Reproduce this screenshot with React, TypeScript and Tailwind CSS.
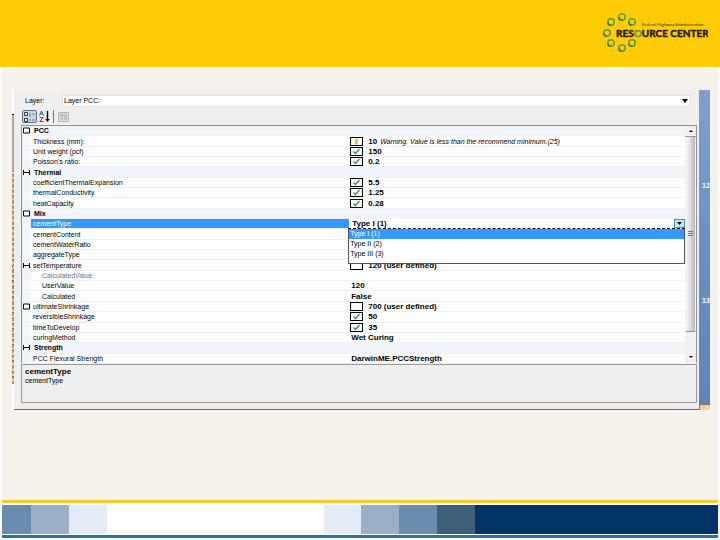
import React, { useState } from 'react';

type Status = 'ok' | 'warning' | 'empty';

interface Row {
    name: string;
    value?: string;
    note?: string;
    status?: Status;
    category?: boolean;
    toggle?: 'box' | 'bar';
    child?: boolean;
    muted?: boolean;
}

const rows: Row[] = [
    { name: 'PCC', category: true, toggle: 'box' },
    { name: 'Thickness (mm):', value: '10', status: 'warning', note: 'Warning. Value is less than the recommend minimum.(25)' },
    { name: 'Unit weight (pcf)', value: '150', status: 'ok' },
    { name: "Poisson's ratio:", value: '0.2', status: 'ok' },
    { name: 'Thermal', category: true, toggle: 'bar' },
    { name: 'coefficientThermalExpansion', value: '5.5', status: 'ok' },
    { name: 'thermalConductivity', value: '1.25', status: 'ok' },
    { name: 'heatCapacity', value: '0.28', status: 'ok' },
    { name: 'Mix', category: true, toggle: 'box' },
    { name: 'cementType' },
    { name: 'cementContent' },
    { name: 'cementWaterRatio' },
    { name: 'aggregateType' },
    { name: 'setTemperature', value: '120 (user defined)', status: 'empty', toggle: 'bar' },
    { name: 'CalculatedValue', child: true, muted: true },
    { name: 'UserValue', value: '120', child: true },
    { name: 'Calculated', value: 'False', child: true },
    { name: 'ultimateShrinkage', value: '700 (user defined)', status: 'empty', toggle: 'box' },
    { name: 'reversibleShrinkage', value: '50', status: 'ok' },
    { name: 'timeToDevelop', value: '35', status: 'ok' },
    { name: 'curingMethod', value: 'Wet Curing' },
    { name: 'Strength', category: true, toggle: 'bar' },
    { name: 'PCC Flexural Strength', value: 'DarwinME.PCCStrength' },
];

const cementTypes = ['Type I (1)', 'Type II (2)', 'Type III (3)'];

function Logo() {
    const dots = [[32, 7], [42, 12], [21, 12], [17, 23], [21, 33], [32, 38], [42, 33]];
    return (
        <svg width="118" height="44" viewBox="0 0 118 44" role="img" aria-label="Resource Center">
            {dots.map(([x, y]) => (
                <g key={`${x}-${y}`} fill="none">
                    <circle cx={x} cy={y} r="3.2" stroke="#5d9f35" strokeWidth="1.5" />
                    <path d={`M${x - 3.2} ${y}a3.2 3.2 0 0 0 3.2 3.2`} stroke="#2f7f6a" strokeWidth="1.5" />
                </g>
            ))}
            <text x="52" y="16" fontFamily="Lato, sans-serif" fontSize="4.4" fill="#3a3000">Federal Highway Administration</text>
            <text x="26" y="27" fontFamily="Lato, sans-serif" fontSize="10" fontWeight="700" fill="#1c1200" stroke="#1c1200" strokeWidth="0.4">
                RES<tspan fill="#5d9f35" stroke="#5d9f35">O</tspan>URCE CENTER
            </text>
        </svg>
    );
}

function StatusIcon({ status }: { status: Status }) {
    return (
        <svg width="13" height="9" viewBox="0 0 13 9" className="mr-[5px] shrink-0">
            <rect x="0.5" y="0.5" width="12" height="8" fill="#fff" stroke="#000" />
            {status === 'ok' && <path d="M3.5 4.5l2 2 4-4.5" fill="none" stroke="#2f9440" strokeWidth="1.3" />}
            {status === 'warning' && <path d="M5 1.5h3v6H5z" fill="#f0d33c" />}
            {status === 'warning' && <path d="M6.5 2.5v2M6.5 5.5v1" stroke="#d8b020" />}
        </svg>
    );
}

function ToggleIcon({ kind }: { kind: 'box' | 'bar' }) {
    return (
        <svg width="7" height="7" viewBox="0 0 7 7" className="mx-auto block">
            {kind === 'box'
                ? <path d="M.5 1h6v5h-6z" fill="#fff" stroke="#000" />
                : <path d="M.5 1v5M6.5 1v5M1 3.5h5" fill="none" stroke="#000" />}
        </svg>
    );
}

function CementCell() {
    const [type, setType] = useState(cementTypes[0]);
    return (
        <td className="relative p-0 align-middle">
            <select
                aria-label="cementType"
                value={type}
                onChange={e => setType(e.target.value)}
                className="block h-[9px] w-full appearance-none bg-white pl-[3px] text-[8px] leading-[9px] font-bold outline-none"
            >
                {cementTypes.map(t => <option key={t}>{t}</option>)}
            </select>
            <span className="pointer-events-none absolute top-0 right-0 flex h-full w-[11px] items-center justify-center border border-[#4a8fae] bg-[#c5e8f6]">
                <svg width="5" height="3" viewBox="0 0 5 3"><path d="M0 0h5L2.5 3z" /></svg>
            </span>
            <ul className="absolute top-full right-0 -left-px z-10 border border-t border-[#555] border-t-black bg-white pb-1 [border-top-style:dashed]">
                {cementTypes.map(t => (
                    <li key={t}>
                        <button
                            onClick={() => setType(t)}
                            className={`block h-[10px] w-full pl-px text-left leading-[10px] ${t === type ? 'bg-[#3399ff] text-white' : ''}`}
                        >
                            {t}
                        </button>
                    </li>
                ))}
            </ul>
        </td>
    );
}

function PropertyRow({ row }: { row: Row }) {
    const selected = row.name === 'cementType';
    return (
        <tr className={`border-b border-[#eff1f4] ${row.category ? 'bg-[#f2f5fa]' : ''}`}>
            <td className="bg-[#f2f5fa] p-0 align-middle">{row.toggle && <ToggleIcon kind={row.toggle} />}</td>
            <th
                scope="row"
                className={`p-0 text-left align-middle ${row.category ? 'pl-[3px] font-bold' : 'font-normal'} ${row.child ? 'pl-[11px]' : 'pl-[2px]'} ${row.muted ? 'text-gray-500' : ''} ${selected ? 'bg-[#3399ff] text-white' : ''}`}
            >
                {row.name}
            </th>
            {selected ? <CementCell /> : (
                <td className="p-0 align-middle">
                    <div className={`flex h-[9px] items-center whitespace-nowrap ${row.status ? 'pl-px' : 'pl-[2px]'}`}>
                        {row.status && <StatusIcon status={row.status} />}
                        <span className="text-[8px] font-bold">{row.value}</span>
                        {row.note && <em className="ml-[3px]">{row.note}</em>}
                    </div>
                </td>
            )}
        </tr>
    );
}

function Toolbar() {
    return (
        <div className="flex h-[15px] items-center pl-2">
            <button aria-label="Categorized" className="flex h-[13px] w-[15px] items-center justify-center rounded-xs border border-[#5b6f88] bg-[#c9d6e6]">
                <svg width="12" height="10" viewBox="0 0 12 10" fill="none" stroke="#26364f">
                    <path d="M.5.5h3v3h-3zM.5 6.5h3v3h-3z" fill="#fff" />
                    <path d="M5 2h2M8 2h3M5 4h2M5 8h2M8 8h3" stroke="#6a7f9c" />
                </svg>
            </button>
            <button aria-label="Alphabetical" className="ml-[2px]">
                <svg width="11" height="13" viewBox="0 0 11 13" fill="none">
                    <path d="M.5 5.5L2.5 1l2 4.5M1.2 4h2.6" stroke="#3a55a8" />
                    <path d="M.8 7.5h3.4L.8 11.5h3.7" stroke="#a02a3a" />
                    <path d="M8.5 1v9" stroke="#000" strokeWidth="1.4" />
                    <path d="M6.2 9h4.6L8.5 12z" fill="#000" />
                </svg>
            </button>
            <span className="mr-1 ml-[3px] h-[13px] w-px bg-[#777]" />
            <button aria-label="Property pages" disabled>
                <svg width="11" height="11" viewBox="0 0 11 11" fill="none" stroke="#b5b5b5">
                    <path d="M.5 1.5h10v9H.5z" fill="#dedede" />
                    <path d="M2 4h7M3 6h2M6 6h3M3 8h2M6 8h3" stroke="#a3a3a3" />
                </svg>
            </button>
        </div>
    );
}

function ScrollBar() {
    return (
        <div className="flex w-[11px] shrink-0 flex-col bg-[#f0f0f0]">
            <button aria-label="Scroll up" className="flex h-[11px] items-center justify-center border-b border-[#999]">
                <svg width="4" height="2"><path d="M0 2L2 0l2 2z" /></svg>
            </button>
            <div className="mx-px flex flex-1 items-center justify-center border-b border-[#888] bg-linear-to-r from-[#f7f7f7] via-[#dcdcde] to-[#b4b5bb]">
                <svg width="5" height="6" stroke="#777"><path d="M0 .5h5M0 2.5h5M0 4.5h5" /></svg>
            </div>
            <button aria-label="Scroll down" className="flex h-[31px] items-end justify-center pb-[5px]">
                <svg width="4" height="2"><path d="M0 0h4L2 2z" /></svg>
            </button>
        </div>
    );
}

function PropertyDialog() {
    return (
        <section className="flex min-w-0 flex-1 flex-col border-b border-[#666] bg-[#efefef] pt-[5px] pb-[6px]">
            <div className="mb-[2px] flex items-center pr-[8px] pl-[11px]">
                <label htmlFor="layer" className="w-[37px]">Layer:</label>
                <div className="relative flex-1">
                    <select
                        id="layer"
                        className="block h-[12px] w-full appearance-none border border-[#e2e2e2] bg-white pl-px leading-[10px] outline-none"
                    >
                        <option>Layer PCC:</option>
                    </select>
                    <svg width="6" height="4" viewBox="0 0 6 4" className="pointer-events-none absolute top-1 right-[3px]"><path d="M0 0h6L3 4z" /></svg>
                </div>
            </div>
            <Toolbar />
            <div className="mt-px mr-[2px] ml-[7px] flex h-[238px] overflow-hidden border-t border-r border-l border-[#8f929b]">
                <div className="min-w-0 flex-1 overflow-hidden bg-white">
                    <table className="h-[238px] w-full table-fixed border-collapse leading-[9px]">
                        <colgroup>
                            <col className="w-[9px]" />
                            <col className="w-[48%]" />
                            <col />
                        </colgroup>
                        <tbody>
                            {rows.map(row => <PropertyRow key={row.name} row={row} />)}
                        </tbody>
                    </table>
                </div>
                <ScrollBar />
            </div>
            <div className="mt-px mr-[2px] ml-[7px] h-[39px] border border-[#9a9a9a] px-[3px] pt-[2px] leading-[9px]">
                <h2 className="text-[8px] font-bold">cementType</h2>
                <p>cementType</p>
            </div>
        </section>
    );
}

export default function App() {
    return (
        <div className="flex min-h-screen flex-col bg-white font-['Liberation_Sans',sans-serif] text-[7px] text-black">
            <header className="flex h-[67px] items-start justify-end bg-[#ffcb05] pt-[10px] pr-[12px]">
                <Logo />
            </header>

            <main className="mx-[2px] mt-px flex-1 bg-[#f7f3ec] pt-[22px] pr-[8px] pl-[10px]">
                <div className="flex">
                    <div className="flex w-[2px] flex-col">
                        <div className="h-6 bg-white" />
                        <div className="h-14 border-t border-black bg-[#a9a9a5]" />
                        <div className="flex-1 bg-[repeating-linear-gradient(160deg,#c98e5a_0_2px,#ecd2b4_2px_4px,#8f6a4c_4px_5px)]" />
                        <div className="h-[26px] bg-white" />
                    </div>
                    <PropertyDialog />
                    <aside className="flex w-[11px] flex-col text-[7px] leading-[9px] font-bold text-white">
                        <div className="flex flex-1 flex-col bg-linear-to-b from-[#7f9fcb] to-[#5c84b6] pt-[91px] pl-[3px]">
                            <span>12</span>
                            <span className="mt-[106px]">13</span>
                        </div>
                        <div className="h-[6px] border-t border-l border-[#777] bg-[#f9d19b]" />
                    </aside>
                </div>
            </main>

            <footer className="mx-[2px] pb-[2px]">
                <div className="h-[3px] bg-[#f6cb2f]" />
                <div className="mt-[2px] mb-px flex h-[29px]">
                    <div className="w-[29px] bg-[#6a8cae]" />
                    <div className="w-[38px] bg-[#9bb0c8]" />
                    <div className="w-[38px] bg-[#e3ecf7]" />
                    <div className="flex-[217] bg-white" />
                    <div className="w-[37px] bg-[#e3ecf7]" />
                    <div className="w-[38px] bg-[#9bb0c8]" />
                    <div className="w-[38px] bg-[#6a8cae]" />
                    <div className="w-[38px] bg-[#3f5e79]" />
                    <div className="flex-[243] bg-[#003366]" />
                </div>
                <div className="h-[3px] bg-[#1f77a8]" />
            </footer>
        </div>
    );
}
